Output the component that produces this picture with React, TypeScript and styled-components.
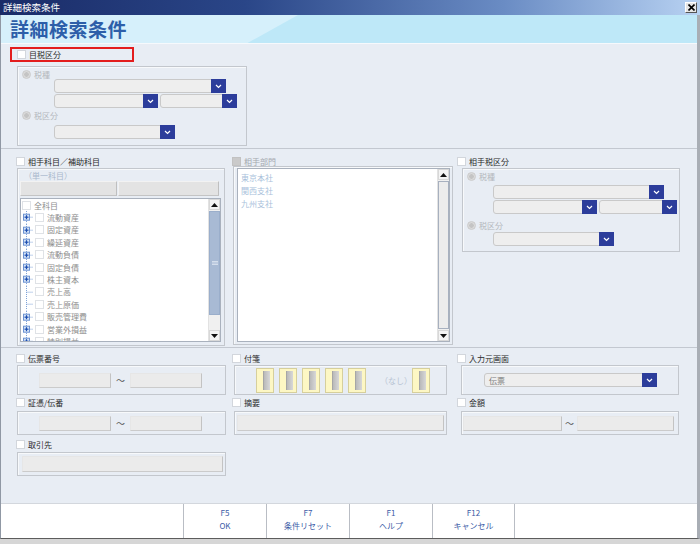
import React from 'react';
import styled, { createGlobalStyle } from 'styled-components';

const GlobalStyle = createGlobalStyle`
  html, body {
    margin: 0;
    padding: 0;
    background: #ffffff;
  }
  body {
    font-family: "Noto Sans CJK JP", "Noto Sans", sans-serif;
    font-size: 8px;
    color: #2b2b2b;
  }
  * {
    box-sizing: border-box;
  }
`;

const Window = styled.div`
  width: 700px;
  height: 544px;
  display: flex;
  flex-direction: column;
  background: #d6d6d6;
  overflow: hidden;
`;

const TitleBar = styled.div`
  flex: none;
  height: 15px;
  display: flex;
  align-items: center;
  justify-content: space-between;
  padding: 0 3px;
  background: linear-gradient(to right, #1a2c68 0%, #2a4688 35%, #6a8cc4 72%, #b8d2f2 100%);
`;

const TitleText = styled.span`
  color: #ffffff;
  font-size: 9.5px;
  line-height: 15px;
`;

const CloseButton = styled.div`
  width: 12px;
  height: 11px;
  display: flex;
  align-items: center;
  justify-content: center;
  background: #e6e6e6;
  border: 1px solid #ffffff;
  border-right-color: #555555;
  border-bottom-color: #555555;
`;

const Frame = styled.div`
  flex: 1;
  display: flex;
  flex-direction: column;
  margin-bottom: 5px;
  background: #e8edf4;
  border-left: 1px solid #9098a4;
  border-right: 3px solid #a9aeb5;
  border-bottom: 1px solid #5c5c5c;
`;

const Header = styled.div`
  position: relative;
  flex: none;
  height: 29px;
  background: #bee8f8;
  border-bottom: 1px solid #f6f9fc;
  overflow: hidden;

  &::before {
    content: '';
    position: absolute;
    left: 0;
    top: 0;
    bottom: 0;
    width: 297px;
    background: #d6f0fb;
    clip-path: polygon(0 0, 100% 0, 83% 100%, 0 100%);
  }
`;

const HeaderTitle = styled.h1`
  position: relative;
  margin: 0;
  padding-left: 9px;
  font-size: 19px;
  font-weight: 700;
  line-height: 28px;
  letter-spacing: 0.5px;
  color: #2d5fa9;
`;

const Divider = styled.div`
  flex: none;
  height: 1px;
  background: #c3c8d0;
`;

const Section = styled.div<{ $height?: number; $top: number }>`
  flex: ${p => (p.$height ? 'none' : '1')};
  height: ${p => (p.$height ? `${p.$height}px` : 'auto')};
  padding-top: ${p => p.$top}px;
  display: flex;
  align-items: flex-start;
`;

const Column = styled.div<{ $width: number; $left: number }>`
  flex: none;
  width: ${p => p.$width}px;
  margin-left: ${p => p.$left}px;
  display: flex;
  flex-direction: column;
`;

const CheckRow = styled.div<{ $disabled?: boolean; $top?: number }>`
  height: 9px;
  margin-top: ${p => p.$top ?? 0}px;
  display: flex;
  align-items: center;
  gap: 3px;
  font-size: 8px;
  line-height: 9px;
  white-space: nowrap;
  color: ${p => (p.$disabled ? '#a4a8ae' : '#2b2b2b')};
`;

const Check = styled.span<{ $disabled?: boolean }>`
  flex: none;
  width: 9px;
  height: 9px;
  background: ${p => (p.$disabled ? '#cacaca' : '#ffffff')};
  border: 1px solid ${p => (p.$disabled ? '#c2c2c2' : '#d2d6dc')};
`;

const HighlightFrame = styled.div`
  width: 124px;
  height: 15px;
  margin-left: 9px;
  padding-left: 5px;
  display: flex;
  align-items: center;
  border: 2px solid #e31d1d;
`;

const GroupBox = styled.div<{ $width: number; $height: number; $left: number; $top: number }>`
  flex: none;
  width: ${p => p.$width}px;
  height: ${p => p.$height}px;
  margin-left: ${p => p.$left}px;
  margin-top: ${p => p.$top}px;
  border: 1px solid #c3c7cd;
  box-shadow: inset 1px 1px 0 #f7f9fb;
  display: flex;
  flex-direction: column;
`;

const GroupBody = styled.div<{ $pad: string }>`
  padding: ${p => p.$pad};
  display: flex;
  flex-direction: column;
`;

const RadioRow = styled.div<{ $top: number }>`
  height: 9px;
  margin-top: ${p => p.$top}px;
  display: flex;
  align-items: center;
  gap: 3px;
  font-size: 8px;
  line-height: 9px;
  color: #b4b8bd;
`;

const Radio = styled.span`
  flex: none;
  width: 9px;
  height: 9px;
  border-radius: 50%;
  background: radial-gradient(circle, #c4c4c4 0 2px, #dadada 2.5px);
  border: 1px solid #cbcbcb;
`;

const SelectRow = styled.div<{ $left: number; $top: number }>`
  display: flex;
  gap: 2px;
  margin-left: ${p => p.$left}px;
  margin-top: ${p => p.$top}px;
`;

const SelectBox = styled.div<{ $width: number }>`
  flex: none;
  width: ${p => p.$width}px;
  height: 14px;
  display: flex;
  align-items: center;
  justify-content: space-between;
  background: #eeeeee;
  border: 1px solid #c9c9c9;
  border-radius: 3px;
  font-size: 8px;
  color: #7c7c7c;
  padding-left: 4px;
`;

const SelectButton = styled.span`
  flex: none;
  width: 15px;
  height: 14px;
  margin: -1px -1px -1px 0;
  display: flex;
  align-items: center;
  justify-content: center;
  background: #2c3d9b;
`;

const Caption = styled.div`
  height: 10px;
  padding-left: 4px;
  font-size: 8px;
  line-height: 10px;
  color: #a9b8cc;
`;

const ButtonRow = styled.div`
  display: flex;
  gap: 1px;
`;

const GrayButton = styled.div<{ $width: number }>`
  width: ${p => p.$width}px;
  height: 15px;
  background: #e3e3e3;
  border: 1px solid #f2f2f2;
  border-right-color: #bfbfbf;
  border-bottom-color: #c4c4c4;
`;

const ListBox = styled.div<{ $width: number; $height: number; $top: number }>`
  flex: none;
  width: ${p => p.$width}px;
  height: ${p => p.$height}px;
  margin-top: ${p => p.$top}px;
  display: flex;
  background: #ffffff;
  border: 1px solid #a9b1bd;
  overflow: hidden;
`;

const ListItems = styled.div<{ $pad: number }>`
  flex: 1;
  padding-top: ${p => p.$pad}px;
  overflow: hidden;
`;

const TreeRow = styled.div`
  height: 12.4px;
  display: flex;
  align-items: center;
  font-size: 8px;
  line-height: 9px;
  color: #8e8e8e;
  white-space: nowrap;
`;

const TreeGutter = styled.span`
  flex: none;
  width: 14px;
  height: 12.4px;
  display: flex;
`;

const TreeCheck = styled.span<{ $left: number }>`
  flex: none;
  width: 9px;
  height: 9px;
  margin-left: ${p => p.$left}px;
  margin-right: 3px;
  border: 1px solid #dfe2e6;
  background: #ffffff;
`;

const DeptRow = styled.div`
  height: 13px;
  padding-left: 3px;
  font-size: 8px;
  line-height: 13px;
  color: #a9bfdb;
`;

const ScrollBar = styled.div`
  flex: none;
  width: 12px;
  display: flex;
  flex-direction: column;
  background: #f0f0f0;
  border-left: 1px solid #e2e2e2;
`;

const ScrollArrow = styled.div`
  flex: none;
  height: 11px;
  display: flex;
  align-items: center;
  justify-content: center;
  background: #f4f4f4;
  border: 1px solid #d8d8d8;
`;

const ScrollThumb = styled.div<{ $height?: number; $blue?: boolean }>`
  flex: ${p => (p.$height ? 'none' : '1')};
  height: ${p => (p.$height ? `${p.$height}px` : 'auto')};
  margin: 1px 0;
  display: flex;
  align-items: center;
  justify-content: center;
  background: ${p => (p.$blue ? '#a8bad4' : '#ececec')};
  border: 1px solid ${p => (p.$blue ? '#9aaecb' : '#a7b0bf')};
`;

const ScrollTrack = styled.div`
  flex: 1;
`;

const FieldBox = styled.div<{ $width: number; $height: number; $left: number; $pad: number; $top: number }>`
  flex: none;
  width: ${p => p.$width}px;
  height: ${p => p.$height}px;
  margin-left: ${p => p.$left}px;
  margin-top: ${p => p.$top}px;
  padding-left: ${p => p.$pad}px;
  display: flex;
  align-items: center;
  border: 1px solid #c3c7cd;
  box-shadow: inset 1px 1px 0 #f7f9fb;
`;

const InputField = styled.div<{ $width: number; $height: number }>`
  flex: none;
  width: ${p => p.$width}px;
  height: ${p => p.$height}px;
  background: #ebebeb;
  border: 1px solid #e6e6e6;
  border-right-color: #c3c3c3;
  border-bottom-color: #cbcbcb;
`;

const Tilde = styled.span<{ $width: number }>`
  flex: none;
  width: ${p => p.$width}px;
  text-align: center;
  font-size: 9px;
  color: #555555;
`;

const Sticky = styled.div<{ $left: number }>`
  flex: none;
  width: 18px;
  height: 25px;
  margin-left: ${p => p.$left}px;
  padding: 2px 3px 2px 6px;
  background: #fdf7c4;
  border: 1px solid #d6cf9c;
`;

const StickyInner = styled.div`
  width: 100%;
  height: 100%;
  background: linear-gradient(to right, #b9b9b9, #d8d8d8);
  border-left: 1px solid #a6a6a6;
`;

const NoneText = styled.span`
  flex: none;
  width: 25px;
  margin-left: 14px;
  font-size: 8px;
  color: #b7c3d3;
  white-space: nowrap;
`;

const Footer = styled.div`
  flex: none;
  height: 35px;
  display: flex;
  background: #ffffff;
  border-top: 1px solid #d3d7dd;
`;

const FooterSpacer = styled.div`
  width: 182px;
  flex: none;
`;

const FKey = styled.div<{ $last?: boolean }>`
  flex: none;
  width: 83px;
  padding-top: 3px;
  display: flex;
  flex-direction: column;
  align-items: center;
  gap: 2px;
  border-left: 1px solid #b9bdc4;
  border-right: ${p => (p.$last ? '1px solid #b9bdc4' : 'none')};
  font-size: 8px;
  line-height: 11px;
  color: #3b5ba6;
`;

const Chevron = () => (
  <svg width="7" height="5" viewBox="0 0 7 5">
    <polyline points="1,1 3.5,3.5 6,1" fill="none" stroke="#ffffff" strokeWidth="1.2" />
  </svg>
);

const Arrow = ({ up }: { up?: boolean }) => (
  <svg width="7" height="4" viewBox="0 0 7 4">
    <polygon points={up ? '0,4 7,4 3.5,0' : '0,0 7,0 3.5,4'} fill="#111111" />
  </svg>
);

const TreeMark = ({ plus }: { plus: boolean }) => (
  <svg width="14" height="12.4" viewBox="0 0 14 12.4">
    <line x1="5.5" y1="0" x2="5.5" y2="12.4" stroke="#7da2d8" strokeDasharray="1 1" />
    <line x1="5.5" y1="6.2" x2="12" y2="6.2" stroke="#7da2d8" strokeDasharray="1 1" />
    {plus && (
      <>
        <rect x="2.5" y="3.2" width="6" height="6" fill="#d7e5f8" stroke="#6c92d2" />
        <line x1="3.5" y1="6.2" x2="7.5" y2="6.2" stroke="#1b4db0" strokeWidth="1.2" />
        <line x1="5.5" y1="4.2" x2="5.5" y2="8.2" stroke="#1b4db0" strokeWidth="1.2" />
      </>
    )}
  </svg>
);

const Select = ({ width, text }: { width: number; text?: string }) => (
  <SelectBox $width={width}>
    <span>{text}</span>
    <SelectButton>
      <Chevron />
    </SelectButton>
  </SelectBox>
);

const accounts: [string, boolean][] = [
  ['流動資産', true],
  ['固定資産', true],
  ['繰延資産', true],
  ['流動負債', true],
  ['固定負債', true],
  ['株主資本', true],
  ['売上高', false],
  ['売上原価', false],
  ['販売管理費', true],
  ['営業外損益', true],
  ['特別損益', true],
];

const departments = ['東京本社', '関西支社', '九州支社'];

const fkeys = [
  ['F5', 'OK'],
  ['F7', '条件リセット'],
  ['F1', 'ヘルプ'],
  ['F12', 'キャンセル'],
];

const App = () => {
  return (
    <>
      <GlobalStyle />
      <Window>
        <TitleBar>
          <TitleText>詳細検索条件</TitleText>
          <CloseButton>
            <svg width="7" height="7" viewBox="0 0 7 7">
              <path d="M0.5 0.5 L6.5 6.5 M6.5 0.5 L0.5 6.5" stroke="#000" strokeWidth="1.6" />
            </svg>
          </CloseButton>
        </TitleBar>

        <Frame>
          <Header>
            <HeaderTitle>詳細検索条件</HeaderTitle>
          </Header>

          {/* 目税区分 */}
          <Section $height={104} $top={3}>
            <Column $width={240} $left={0}>
              <HighlightFrame>
                <CheckRow>
                  <Check />
                  目税区分
                </CheckRow>
              </HighlightFrame>
              <GroupBox $width={230} $height={80} $left={16} $top={4}>
                <GroupBody $pad="3px 0 0 4px">
                  <RadioRow $top={0}>
                    <Radio />
                    税種
                  </RadioRow>
                  <SelectRow $left={32} $top={0}>
                    <Select width={172} />
                  </SelectRow>
                  <SelectRow $left={32} $top={1}>
                    <Select width={104} />
                    <Select width={77} />
                  </SelectRow>
                  <RadioRow $top={3}>
                    <Radio />
                    税区分
                  </RadioRow>
                  <SelectRow $left={32} $top={5}>
                    <Select width={121} />
                  </SelectRow>
                </GroupBody>
              </GroupBox>
            </Column>
          </Section>

          <Divider />

          {/* 相手科目 / 相手部門 / 相手税区分 */}
          <Section $height={198} $top={8}>
            <Column $width={210} $left={15}>
              <CheckRow>
                <Check />
                相手科目／補助科目
              </CheckRow>
              <GroupBox $width={208} $height={178} $left={1} $top={2}>
                <GroupBody $pad="2px 0 0 2px">
                  <Caption>（単一科目）</Caption>
                  <ButtonRow>
                    <GrayButton $width={97} />
                    <GrayButton $width={101} />
                  </ButtonRow>
                  <ListBox $width={201} $height={144} $top={2}>
                    <ListItems $pad={0}>
                      <TreeRow>
                        <TreeCheck $left={1} />
                        全科目
                      </TreeRow>
                      {accounts.map(([name, plus]) => (
                        <TreeRow key={name}>
                          <TreeGutter>
                            <TreeMark plus={plus} />
                          </TreeGutter>
                          <TreeCheck $left={0} />
                          {name}
                        </TreeRow>
                      ))}
                    </ListItems>
                    <ScrollBar>
                      <ScrollArrow>
                        <Arrow up />
                      </ScrollArrow>
                      <ScrollThumb $height={104} $blue>
                        <svg width="6" height="4" viewBox="0 0 6 4">
                          <path d="M0 0.5H6M0 2H6M0 3.5H6" stroke="#dfe7f2" strokeWidth="0.8" />
                        </svg>
                      </ScrollThumb>
                      <ScrollTrack />
                      <ScrollArrow>
                        <Arrow />
                      </ScrollArrow>
                    </ScrollBar>
                  </ListBox>
                </GroupBody>
              </GroupBox>
            </Column>

            <Column $width={221} $left={6}>
              <CheckRow $disabled>
                <Check $disabled />
                相手部門
              </CheckRow>
              <GroupBox $width={220} $height={179} $left={1} $top={0}>
                <GroupBody $pad="1px 0 0 3px">
                  <ListBox $width={213} $height={174} $top={0}>
                    <ListItems $pad={2}>
                      {departments.map(d => (
                        <DeptRow key={d}>{d}</DeptRow>
                      ))}
                    </ListItems>
                    <ScrollBar>
                      <ScrollArrow>
                        <Arrow up />
                      </ScrollArrow>
                      <ScrollThumb />
                      <ScrollArrow>
                        <Arrow />
                      </ScrollArrow>
                    </ScrollBar>
                  </ListBox>
                </GroupBody>
              </GroupBox>
            </Column>

            <Column $width={230} $left={4}>
              <CheckRow>
                <Check />
                相手税区分
              </CheckRow>
              <GroupBox $width={218} $height={84} $left={5} $top={2}>
                <GroupBody $pad="3px 0 0 4px">
                  <RadioRow $top={0}>
                    <Radio />
                    税種
                  </RadioRow>
                  <SelectRow $left={26} $top={4}>
                    <Select width={171} />
                  </SelectRow>
                  <SelectRow $left={26} $top={1}>
                    <Select width={104} />
                    <Select width={78} />
                  </SelectRow>
                  <RadioRow $top={7}>
                    <Radio />
                    税区分
                  </RadioRow>
                  <SelectRow $left={26} $top={2}>
                    <Select width={121} />
                  </SelectRow>
                </GroupBody>
              </GroupBox>
            </Column>
          </Section>

          <Divider />

          {/* 下段の条件 */}
          <Section $top={6}>
            <Column $width={211} $left={15}>
              <CheckRow>
                <Check />
                伝票番号
              </CheckRow>
              <FieldBox $width={209} $height={30} $left={1} $pad={21} $top={2}>
                <InputField $width={72} $height={15} />
                <Tilde $width={19}>～</Tilde>
                <InputField $width={72} $height={15} />
              </FieldBox>
              <CheckRow $top={3}>
                <Check />
                証憑/伝番
              </CheckRow>
              <FieldBox $width={209} $height={24} $left={1} $pad={21} $top={4}>
                <InputField $width={72} $height={15} />
                <Tilde $width={19}>～</Tilde>
                <InputField $width={72} $height={15} />
              </FieldBox>
              <CheckRow $top={5}>
                <Check />
                取引先
              </CheckRow>
              <FieldBox $width={209} $height={24} $left={1} $pad={4} $top={3}>
                <InputField $width={201} $height={16} />
              </FieldBox>
            </Column>

            <Column $width={221} $left={5}>
              <CheckRow>
                <Check />
                付箋
              </CheckRow>
              <FieldBox $width={213} $height={30} $left={2} $pad={21} $top={2}>
                {[0, 1, 2, 3, 4].map(i => (
                  <Sticky key={i} $left={i === 0 ? 0 : 5}>
                    <StickyInner />
                  </Sticky>
                ))}
                <NoneText>（なし）</NoneText>
                <Sticky $left={7}>
                  <StickyInner />
                </Sticky>
              </FieldBox>
              <CheckRow $top={3}>
                <Check />
                摘要
              </CheckRow>
              <FieldBox $width={213} $height={24} $left={2} $pad={2} $top={4}>
                <InputField $width={207} $height={16} />
              </FieldBox>
            </Column>

            <Column $width={224} $left={4}>
              <CheckRow>
                <Check />
                入力元画面
              </CheckRow>
              <FieldBox $width={218} $height={30} $left={4} $pad={22} $top={2}>
                <Select width={173} text="伝票" />
              </FieldBox>
              <CheckRow $top={3}>
                <Check />
                金額
              </CheckRow>
              <FieldBox $width={218} $height={24} $left={4} $pad={1} $top={4}>
                <InputField $width={99} $height={15} />
                <Tilde $width={15}>～</Tilde>
                <InputField $width={97} $height={15} />
              </FieldBox>
            </Column>
          </Section>

          <Footer>
            <FooterSpacer />
            {fkeys.map(([key, label], i) => (
              <FKey key={key} $last={i === fkeys.length - 1}>
                <span>{key}</span>
                <span>{label}</span>
              </FKey>
            ))}
          </Footer>
        </Frame>
      </Window>
    </>
  );
};

export default App;
